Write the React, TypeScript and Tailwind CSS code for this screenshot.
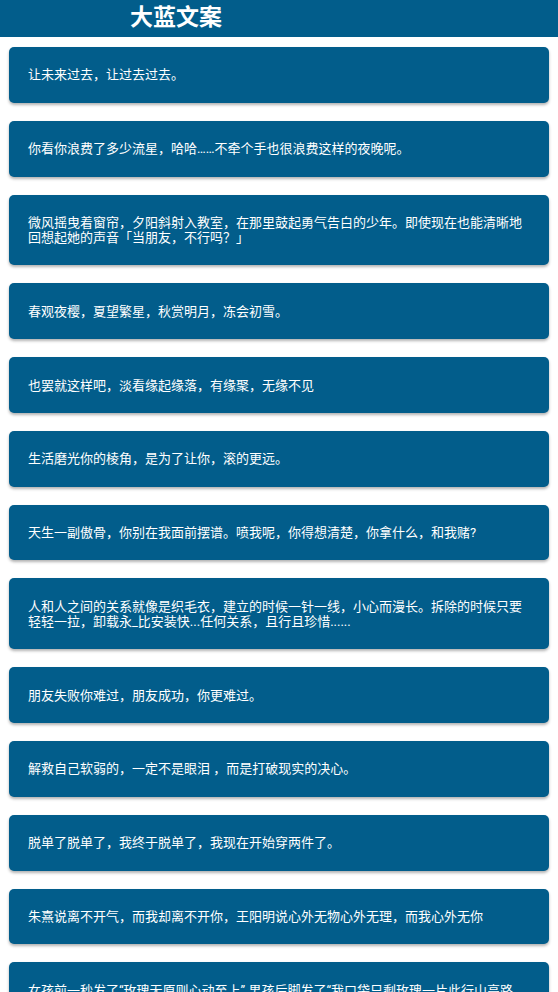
const QUOTES: string[] = [
  "让未来过去，让过去过去。",
  "你看你浪费了多少流星，哈哈……不牵个手也很浪费这样的夜晚呢。",
  "微风摇曳着窗帘，夕阳斜射入教室，在那里鼓起勇气告白的少年。即使现在也能清晰地回想起她的声音「当朋友，不行吗？」",
  "春观夜樱，夏望繁星，秋赏明月，冻会初雪。",
  "也罢就这样吧，淡看缘起缘落，有缘聚，无缘不见",
  "生活磨光你的棱角，是为了让你，滚的更远。",
  "天生一副傲骨，你别在我面前摆谱。喷我呢，你得想清楚，你拿什么，和我赌?",
  "人和人之间的关系就像是织毛衣，建立的时候一针一线，小心而漫长。拆除的时候只要轻轻一拉，卸载永_比安装快...任何关系，且行且珍惜......",
  "朋友失败你难过，朋友成功，你更难过。",
  "解救自己软弱的，一定不是眼泪 ，而是打破现实的决心。",
  "脱单了脱单了，我终于脱单了，我现在开始穿两件了。",
  "朱熹说离不开气，而我却离不开你，王阳明说心外无物心外无理，而我心外无你",
  "女孩前一秒发了“玫瑰无原则心动至上” 男孩后脚发了“我口袋只剩玫瑰一片此行山高路远”",
]

export default function App() {
  return (
    <div className="min-h-screen bg-white font-['Roboto','Noto_Sans_CJK_SC',sans-serif]">
      <header className="h-[37px] bg-[#025d8b] pl-[130px] flex items-center">
        <h1 className="text-[23px] leading-none font-bold text-white -mt-[3px]">大蓝文案</h1>
      </header>
      <main className="flex flex-col gap-[18px] px-[9px] pt-[10px] pb-6">
        {QUOTES.map((q, i) => (
          <div
            key={i}
            className="rounded-[5px] bg-[#025d8b] px-[19px] py-[20.4px] text-[13px] leading-[15px] text-white shadow-[0_2px_3px_rgba(0,0,0,0.3)]"
          >
            {q}
          </div>
        ))}
      </main>
    </div>
  )
}
